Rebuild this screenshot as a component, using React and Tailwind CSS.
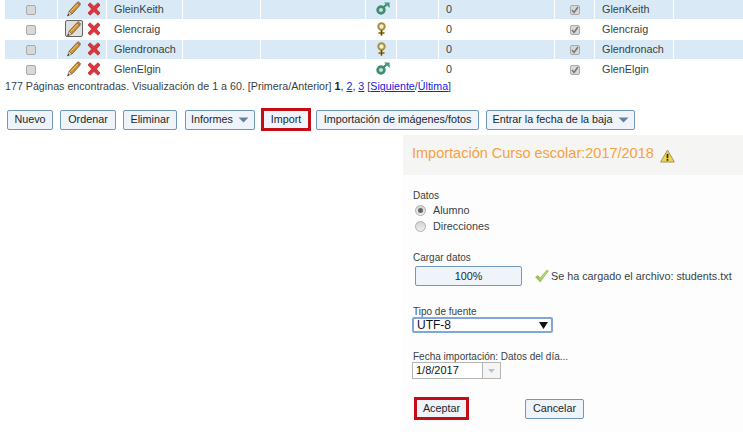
const rows = [
  { name: 'GleinKeith', alias: 'GlenKeith', male: true, tint: true },
  { name: 'Glencraig', alias: 'Glencraig', male: false, tint: false, focused: true },
  { name: 'Glendronach', alias: 'Glendronach', male: false, tint: true },
  { name: 'GlenElgin', alias: 'GlenElgin', male: true, tint: false },
];

const Pencil = () => (
  <svg width="15" height="16" viewBox="1 0 15 16">
    <path d="M3.2 10.2 L11 1.6 L14 4.3 L6 13 Z" fill="#cf9434" stroke="#6e5a30" strokeWidth="0.8" />
    <path d="M4.6 10.6 L12 2.8" stroke="#edc469" strokeWidth="1" />
    <path d="M11 1.6 L12.4 0.6 L14.6 2.6 L14 4.3 Z" fill="#c9787a" stroke="#7d5a5a" strokeWidth="0.6" />
    <path d="M3.2 10.2 L6 13 L1.4 15 Z" fill="#e3d2ae" stroke="#6d5a3a" strokeWidth="0.6" />
    <path d="M1.4 15 L2.2 12.8 L3.4 14 Z" fill="#333" />
  </svg>
);

const Cross = () => (
  <svg width="14" height="14" viewBox="0 0 14 14">
    <path d="M1 3 L3 0.8 L7 4.4 L11 0.8 L13 3 L9.4 7 L13 11 L11 13.2 L7 9.6 L3 13.2 L1 11 L4.6 7 Z" fill="#e0343a" stroke="#a82a30" strokeWidth="0.7" />
  </svg>
);

const Male = () => (
  <svg width="14" height="13" viewBox="0 0 14 13">
    <circle cx="5" cy="8" r="3.4" fill="#bfe3d2" stroke="#3f8c74" strokeWidth="2.6" />
    <path d="M7.5 5.5 L10.5 2.5" stroke="#3f8c74" strokeWidth="2.2" />
    <path d="M8 0.4 L13.6 0.4 L13.6 6 Z" fill="#4a9a80" />
  </svg>
);

const Female = () => (
  <svg width="11" height="14" viewBox="0 0 11 14">
    <circle cx="5.5" cy="4.5" r="3.2" fill="#f6efc8" stroke="#a58f42" strokeWidth="2" />
    <path d="M5.5 8 V13.6 M2.5 11 H8.5" stroke="#94803a" strokeWidth="2" />
    <path d="M5.5 8 V13.6" stroke="#3a3a30" strokeWidth="0.8" />
  </svg>
);

const Warning = () => (
  <svg width="15" height="14" viewBox="0 0 15 14">
    <path d="M7.5 1 L14.4 13 L0.6 13 Z" fill="#f1d54a" stroke="#a19468" strokeWidth="1" strokeLinejoin="round" />
    <path d="M7.5 4.8 V9.2" stroke="#3a3320" strokeWidth="1.8" />
    <rect x="6.6" y="10" width="1.8" height="1.8" fill="#3a3320" />
  </svg>
);

const Check = () => (
  <svg width="14" height="14" viewBox="0 0 14 14">
    <path d="M0.5 8 L3 6.5 L5 9 L12 1 L13.5 2 L5.2 13 Z" fill="#9cc653" stroke="#86a94a" strokeWidth="0.5" />
    <path d="M5.2 10.5 L12.6 2" stroke="#d5ea9c" strokeWidth="0.8" />
  </svg>
);

const Caret = () => (
  <svg width="11" height="6" viewBox="0 0 11 6" className="ml-[5px]">
    <path d="M0.5 0.5 H10.5 L5.5 5.5 Z" fill="#64829f" />
  </svg>
);

const Box = ({ checked }) => (
  <span className="w-[10px] h-[10px] rounded-[2px] border border-[#aaaaaa] bg-[#d8d8d8] flex items-center justify-center">
    {checked && (
      <svg width="8" height="8" viewBox="0 0 8 8">
        <path d="M1 4 L3 6.5 L7 1" fill="none" stroke="#777" strokeWidth="1.5" />
      </svg>
    )}
  </span>
);

const Btn = ({ children, className = '' }) => (
  <button className={`h-5 flex items-center justify-center rounded-[2px] border border-[#7097bd] bg-[#eef4f9] text-[#1c2730] ${className}`}>
    {children}
  </button>
);

const RedBox = ({ children, className = '' }) => (
  <button className={`flex items-center justify-center border-[3px] border-[#c20e14] bg-[#eef4f9] text-[#1c2730] ${className}`}>
    {children}
  </button>
);

const Radio = ({ checked }) => (
  <span className="w-[11px] h-[11px] rounded-full border border-[#b0b0b0] bg-linear-to-b from-[#d4d4d4] to-[#efefef] flex items-center justify-center">
    {checked && <span className="w-[5px] h-[5px] rounded-full bg-[#666]" />}
  </span>
);

const Row = ({ row }) => {
  const cell = row.tint ? 'bg-[#d9eaf6]' : 'bg-white';
  return (
    <div className="grid grid-cols-[52px_48px_75px_77px_104px_30px_41px_115px_39px_78px_69px] gap-x-px h-[19px] text-[#3a3f44]">
      <div className={`${cell} flex items-center justify-center`}><Box /></div>
      <div className={`${cell} flex items-center`}>
        <span className={`w-[18px] h-[17px] ml-[7px] -translate-y-px flex items-center justify-center rounded-[2px] ${row.focused ? 'border border-[#666] bg-[#dfdfdf]' : ''}`}>
          <Pencil />
        </span>
        <span className="ml-[4px] -translate-y-px"><Cross /></span>
      </div>
      <div className={`${cell} flex items-center pl-[7px]`}>{row.name}</div>
      <div className={cell} />
      <div className={cell} />
      <div className={`${cell} flex items-center pl-[10px]`}>
        <span className="-translate-y-px">{row.male ? <Male /> : <Female />}</span>
      </div>
      <div className={cell} />
      <div className={`${cell} flex items-center pl-[7px]`}>0</div>
      <div className={`${cell} flex items-center justify-center`}><Box checked /></div>
      <div className={`${cell} flex items-center pl-[7px]`}>{row.alias}</div>
      <div className={cell} />
    </div>
  );
};

export default function App() {
  return (
    <div className="w-[743px] h-[436px] overflow-hidden bg-white text-[10.8px] leading-none font-['Liberation_Sans',Arial,sans-serif] text-[#333]">
      <div className="pl-[5px] flex flex-col gap-y-px">
        {rows.map((r) => <Row key={r.name} row={r} />)}
      </div>

      <div className="pl-[5px] mt-[1px] h-[13px] flex items-center text-[10.7px] text-[#3a3f44] whitespace-pre">
        177 Páginas encontradas. Visualización de 1 a 60. [Primera/Anterior] <b className="font-bold text-[#222]">1</b>, <a className="underline text-[#2222dd]">2</a>, <a className="underline text-[#2222dd]">3</a> [<a className="underline text-[#2222dd]">Siguiente</a>/<a className="underline text-[#2222dd]">Última</a>]
      </div>

      <div className="mt-[15px] pl-[7px] h-[23px] flex items-center">
        <Btn className="w-[46px]">Nuevo</Btn>
        <Btn className="w-[56px] ml-[7px]">Ordenar</Btn>
        <Btn className="w-[54px] ml-[7px]">Eliminar</Btn>
        <Btn className="w-[70px] ml-[8px]">Informes<Caret /></Btn>
        <RedBox className="w-[50px] h-[23px] ml-[6px]">Import</RedBox>
        <Btn className="w-[163px] ml-[5px]">Importación de imágenes/fotos</Btn>
        <Btn className="w-[149px] ml-[7px]">Entrar la fecha de la baja<Caret /></Btn>
      </div>

      <div className="mt-[4px] ml-[403px] w-[340px] h-[296px] bg-[#fdfdfd]">
        <div className="h-10 bg-[#f5f5f3] flex items-center pl-[9px] pb-[4px] text-[14.5px] text-[#f7a23f]">
          Importación Curso escolar:2017/2018
          <span className="ml-[6px] mt-[6px]"><Warning /></span>
        </div>

        <div className="pl-[10px] pt-[15px] text-[#3a3f44]">
          <div className="h-[11px] flex items-center text-[10px]">Datos</div>
          <div className="h-4 mt-px flex items-center pl-[2px]">
            <Radio checked />
            <span className="ml-[7px]">Alumno</span>
          </div>
          <div className="h-4 flex items-center pl-[2px]">
            <Radio />
            <span className="ml-[7px]">Direcciones</span>
          </div>

          <div className="h-[11px] mt-[18px] flex items-center text-[10px]">Cargar datos</div>
          <div className="mt-[3px] flex items-center pl-[2px]">
            <div className="w-[107px] h-5 rounded-[2px] border border-[#7097bd] bg-[#eef4f9] flex items-center justify-center text-[#1c2730]">100%</div>
            <span className="ml-[13px]"><Check /></span>
            <span className="ml-[2px]">Se ha cargado el archivo: students.txt</span>
          </div>

          <div className="h-[11px] mt-[20px] flex items-center text-[10px]">Tipo de fuente</div>
          <div className="w-[141px] h-[16px] -ml-px rounded-[2px] border-2 border-[#7fa7dc] bg-white flex items-center justify-between pl-[3px] pr-[1px] text-[12px] text-[#111]">
            UTF-8
            <svg width="9" height="7" viewBox="0 0 9 7" className="mr-[2px]"><path d="M0 0 H9 L4.5 7 Z" fill="#111" /></svg>
          </div>

          <div className="h-[11px] mt-[18px] flex items-center text-[10px]">Fecha importación: Datos del día...</div>
          <div className="w-[89px] h-[17px] -ml-px border border-[#b5b5b5] bg-white flex items-center text-[11px] text-[#111]">
            <span className="flex-1 pl-[3px]">1/8/2017</span>
            <span className="w-[18px] h-full border-l border-[#b5b5b5] bg-[#f5f5f5] flex items-center justify-center">
              <svg width="7" height="4" viewBox="0 0 7 4"><path d="M0 0 H7 L3.5 4 Z" fill="#b4c4d2" /></svg>
            </span>
          </div>

          <div className="mt-[18px] h-[23px] flex items-center pl-px">
            <RedBox className="w-[55px] h-[23px]">Aceptar</RedBox>
            <Btn className="w-[59px] ml-[56px]">Cancelar</Btn>
          </div>
        </div>
      </div>
    </div>
  );
}
